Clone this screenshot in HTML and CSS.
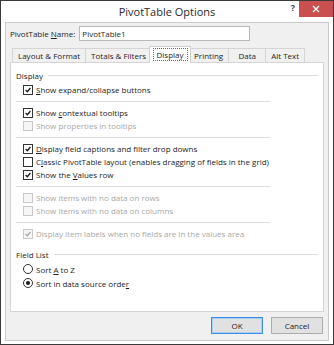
FILE: index.html
```html
<!DOCTYPE html>
<html lang="en">
<head>
    <meta charset="UTF-8">
    <title>PivotTable Options</title>
    <link rel="stylesheet" href="styles.css">
</head>
<body>
<div class="window">
    <div class="titlebar">
        <div class="title">PivotTable Options</div>
        <div class="controls">
            <span class="help">?</span>
            <span class="close">
                <svg width="8" height="8" viewBox="0 0 8 8"><path d="M1 1 L7 7 M7 1 L1 7" stroke="#fff" stroke-width="1.4"/></svg>
            </span>
        </div>
    </div>

    <div class="dialog">
        <div class="name-row">
            <label for="ptname">PivotTable <u>N</u>ame:</label>
            <input type="text" id="ptname" value="PivotTable1">
        </div>

        <div class="tabs">
            <div class="tab">Layout &amp; Format</div>
            <div class="tab">Totals &amp; Filters</div>
            <div class="tab active"><span class="focus">Display</span></div>
            <div class="tab">Printing</div>
            <div class="tab">Data</div>
            <div class="tab">Alt Text</div>
        </div>

        <div class="panel">
            <div class="section-title"><span>Display</span><span class="rule"></span></div>

            <div class="group first">
                <div class="row"><span class="cb checked"><svg viewBox="0 0 10 10"><path d="M2 5 L4.2 7.2 L8 2.5"/></svg></span><span><u>S</u>how expand/collapse buttons</span></div>
            </div>
            <div class="sep"></div>
            <div class="group">
                <div class="row"><span class="cb checked"><svg viewBox="0 0 10 10"><path d="M2 5 L4.2 7.2 L8 2.5"/></svg></span><span>Show <u>c</u>ontextual tooltips</span></div>
                <div class="row disabled"><span class="cb"></span><span>Show properties in tooltips</span></div>
            </div>
            <div class="sep"></div>
            <div class="group">
                <div class="row"><span class="cb checked"><svg viewBox="0 0 10 10"><path d="M2 5 L4.2 7.2 L8 2.5"/></svg></span><span><u>D</u>isplay field captions and filter drop downs</span></div>
                <div class="row"><span class="cb"></span><span>C<u>l</u>assic PivotTable layout (enables dragging of fields in the grid)</span></div>
                <div class="row"><span class="cb checked"><svg viewBox="0 0 10 10"><path d="M2 5 L4.2 7.2 L8 2.5"/></svg></span><span>Show the <u>V</u>alues row</span></div>
            </div>
            <div class="sep"></div>
            <div class="group">
                <div class="row disabled"><span class="cb"></span><span>Show items with no data on rows</span></div>
                <div class="row disabled"><span class="cb"></span><span>Show items with no data on columns</span></div>
            </div>
            <div class="sep"></div>
            <div class="group">
                <div class="row disabled"><span class="cb checked"><svg viewBox="0 0 10 10"><path d="M2 5 L4.2 7.2 L8 2.5"/></svg></span><span>Display item labels when no fields are in the values area</span></div>
            </div>

            <div class="section-title field-list"><span>Field List</span><span class="rule"></span></div>
            <div class="group radios">
                <div class="row"><span class="radio"></span><span>Sort <u>A</u> to Z</span></div>
                <div class="row"><span class="radio on"></span><span>Sort in data source orde<u>r</u></span></div>
            </div>
        </div>

        <div class="buttons">
            <button class="btn default">OK</button>
            <button class="btn">Cancel</button>
        </div>
    </div>
</div>
</body>
</html>
```

FILE: styles.css
```css
body {
    margin: 0;
    font-family: "Open Sans", "Noto Sans", sans-serif;
    font-size: 8px;
    color: #1e1e1e;
}
.window {
    width: 334px; height: 345px; box-sizing: border-box;
    border: 1px solid #3a3a3a; background: #fff;
    display: flex; flex-direction: column;
}

/* title bar */
.titlebar {
    height: 20px; flex: none;
    display: grid; grid-template-columns: 1fr auto 1fr;
}
.title { grid-column: 2; font-size: 11px; line-height: 21px; color: #2b2b2b; }
.controls { grid-column: 3; justify-self: end; display: flex; align-items: flex-start; }
.help { width: 12px; font-size: 9px; font-weight: bold; line-height: 14px; color: #444; text-align: center; }
.close {
    width: 34px; height: 16px; background: #c9504f;
    display: flex; align-items: center; justify-content: center;
}

/* dialog body */
.dialog {
    flex: 1; margin: 1px 4px 3px; padding: 0 4px;
    border: 1px solid #cbcbcb; background: #f0f0f0;
    display: flex; flex-direction: column;
}
.name-row { display: flex; align-items: center; gap: 4px; margin-top: 3px; height: 15px; }
.name-row label { color: #1e1e1e; }
.name-row input {
    width: 171px; height: 15px; box-sizing: border-box; margin: 0;
    border: 1px solid #b9b9b9; background: #fff;
    font: inherit; padding: 0 2px; color: #1e1e1e;
}

/* tabs */
.tabs { display: flex; align-items: flex-end; height: 16px; margin-top: 5px; padding-left: 2px; }
.tab {
    height: 14px; min-width: 38px; box-sizing: border-box; padding: 0 5px;
    border: 1px solid #d5d5d5; border-bottom: none; margin-left: -1px;
    background: #f0f0f0; line-height: 13px; white-space: nowrap; text-align: center;
}
.tab:first-child { margin-left: 0; }
.tab.active {
    position: relative; z-index: 1;
    height: 17px; min-width: 42px; margin: 0 -2px -1px -3px; padding: 1px 2px 0;
    background: #fff; border-color: #d0d0d0;
}
.focus { display: inline-block; border: 1px dotted #6a6a6a; padding: 0 3px; line-height: 11px; }

/* panel */
.panel {
    flex: 1; background: #fff; border: 1px solid #d5d5d5;
    padding: 6px 5px 0 5px;
}
.section-title { display: flex; align-items: center; gap: 5px; height: 12px; }
.section-title .rule { flex: 1; border-top: 1px solid #dcdcdc; }
.field-list { margin-top: 8px; }
.group { padding-left: 7px; }
.group.first { margin-top: 2px; }
.row { display: flex; align-items: center; gap: 3px; height: 13px; white-space: nowrap; }
.radios { margin-top: 2px; }
.radios .row { height: 14px; }
.sep { width: 254px; border-top: 1px solid #dddddd; margin: 5px 0 4px; }

.cb {
    width: 10px; height: 10px; box-sizing: border-box; flex: none;
    border: 1px solid #333; background: #fff;
}
.cb svg { display: block; width: 8px; height: 8px; }
.cb path { fill: none; stroke: #1a1a1a; stroke-width: 1.6; }
.disabled { color: #a8a8a8; }
.disabled .cb { border-color: #c8c8c8; background: #f6f6f6; }
.disabled .cb path { stroke: #a8a8a8; }

.radio {
    width: 10px; height: 10px; box-sizing: border-box; flex: none;
    border: 1px solid #333; border-radius: 50%; background: #fff;
    display: flex; align-items: center; justify-content: center;
}
.radio.on::after { content: ""; width: 4px; height: 4px; border-radius: 50%; background: #1a1a1a; }

/* buttons */
.buttons { display: flex; justify-content: flex-end; gap: 8px; margin: 5px 1px 6px 0; }
.btn {
    width: 52px; height: 17px; box-sizing: border-box; padding: 0;
    border: 1px solid #adadad; background: #e1e1e1;
    font: inherit; color: #1e1e1e;
}
.btn.default { border-color: #3c8fde; box-shadow: inset 0 0 0 1px #a9cdf0; }
```
